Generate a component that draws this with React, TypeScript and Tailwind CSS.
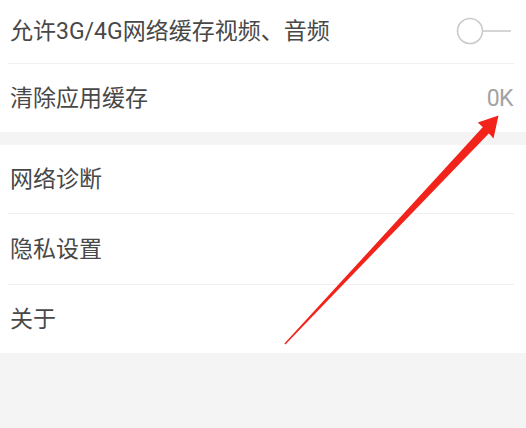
const font = { fontFamily: '"Roboto", "Noto Sans CJK SC", sans-serif' };

function Row({ label, right, className }: { label: string; right?: React.ReactNode; className: string }) {
  return (
    <div className={`flex items-center justify-between pl-[10px] pr-[13px] bg-white ${className}`}>
      <span className="text-[23px] text-[#484848] leading-none">{label}</span>
      {right}
    </div>
  );
}

function Divider() {
  return (
    <div className="bg-white pl-[8px] pr-[12px]">
      <div className="h-px bg-[#efefef]" />
    </div>
  );
}

function Toggle() {
  return (
    <svg width="58" height="28" viewBox="0 0 58 28" className="-mt-[2px]">
      <circle cx="15" cy="14" r="12.5" fill="none" stroke="#cbcbcb" strokeWidth="1.6" />
      <line x1="27.5" y1="14" x2="56" y2="14" stroke="#cbcbcb" strokeWidth="1.6" />
    </svg>
  );
}

function Arrow() {
  // red annotation arrow drawn over the list
  return (
    <svg className="absolute left-0 top-0 pointer-events-none" width="526" height="428" viewBox="0 0 526 428">
      <polygon points="285.4,344.4 284.4,343.6 483.6,126.2 490,132.2" fill="#f2231a" />
      <polygon points="498.5,115.5 477.8,122.6 486.2,130.3 493.5,138.4" fill="#f2231a" />
    </svg>
  );
}

export default function App() {
  return (
    <div className="relative w-[526px] h-[428px] overflow-hidden bg-[#f4f4f4]" style={font}>
      <Row
        label="允许3G/4G网络缓存视频、音频"
        className="h-[63px]"
        right={<Toggle />}
      />
      <Divider />
      <Row
        label="清除应用缓存"
        className="h-[68px]"
        right={<span className="text-[23px] text-[#a3a3a3] leading-none tracking-[-0.5px]">0K</span>}
      />
      <div className="h-[13px] bg-[#f4f4f4]" />
      <Row label="网络诊断" className="h-[68px]" />
      <Divider />
      <Row label="隐私设置" className="h-[70px]" />
      <Divider />
      <Row label="关于" className="h-[68px]" />
      <Arrow />
    </div>
  );
}
